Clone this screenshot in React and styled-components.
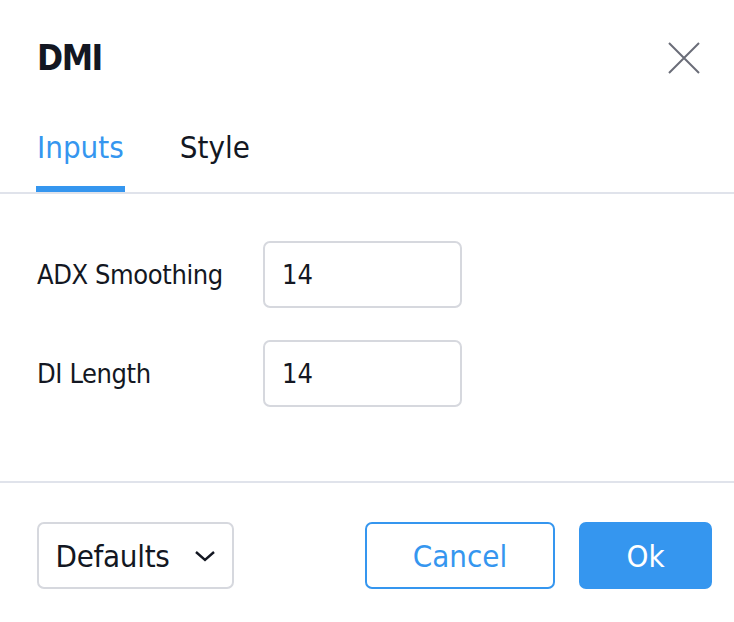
import { useState } from 'react'
import styled, { createGlobalStyle } from 'styled-components'

const GlobalStyle = createGlobalStyle`
  html, body {
    margin: 0;
    padding: 0;
    background: #ffffff;
  }
  body {
    font-family: "DejaVu Sans Condensed", "DejaVu Sans", sans-serif;
    font-stretch: condensed;
    color: #131722;
  }
`;

const Dialog = styled.div`
  width: 734px;
  height: 622px;
  display: flex;
  flex-direction: column;
  background: #ffffff;
`;

const Header = styled.div`
  display: flex;
  align-items: center;
  justify-content: space-between;
  height: 56px;
  padding: 30px 34px 0 37px;
`;

const Title = styled.h1`
  margin: 0;
  font-size: 35px;
  font-weight: 700;
  letter-spacing: -1.5px;
`;

const CloseButton = styled.button`
  display: flex;
  align-items: center;
  justify-content: center;
  width: 32px;
  height: 32px;
  padding: 0;
  border: none;
  background: transparent;
  color: #6a6d78;
  cursor: pointer;
`;

const Tabs = styled.div`
  display: flex;
  gap: 56px;
  padding: 0 37px;
  margin-top: 43px;
  border-bottom: 2px solid #e0e3eb;
`;

const Tab = styled.button`
  position: relative;
  padding: 0 0 27px;
  border: none;
  background: transparent;
  font-family: inherit;
  font-stretch: condensed;
  font-size: 31px;
  color: ${props => props.active ? '#3596ef' : '#131722'};
  cursor: pointer;

  &::after {
    content: '';
    position: absolute;
    left: -1px;
    right: -1px;
    bottom: 0;
    height: 6px;
    background: ${props => props.active ? '#3596ef' : 'transparent'};
  }
`;

const Body = styled.div`
  flex: 1;
  display: grid;
  grid-template-columns: 226px 199px;
  grid-auto-rows: 67px;
  row-gap: 32px;
  align-content: start;
  align-items: center;
  padding: 47px 37px 0;
  border-bottom: 2px solid #e0e3eb;
`;

const Label = styled.label`
  font-size: 27px;
  letter-spacing: -0.4px;
`;

const NumberInput = styled.input`
  box-sizing: border-box;
  width: 199px;
  height: 67px;
  padding: 0 17px;
  border: 2px solid #d6d8de;
  border-radius: 7px;
  font-family: inherit;
  font-stretch: condensed;
  font-size: 27px;
  color: #131722;
  outline: none;
`;

const Footer = styled.div`
  display: flex;
  align-items: center;
  gap: 24px;
  height: 67px;
  padding: 39px 22px 33px 37px;
`;

const Button = styled.button`
  box-sizing: border-box;
  display: flex;
  align-items: center;
  justify-content: center;
  gap: 24px;
  height: 67px;
  width: ${props => props.width}px;
  border-radius: 7px;
  border: 2px solid ${props =>
    props.variant === 'primary' ? '#3596ef' :
    props.variant === 'outline' ? '#3596ef' : '#d6d8de'};
  background: ${props => props.variant === 'primary' ? '#3596ef' : '#ffffff'};
  color: ${props =>
    props.variant === 'primary' ? '#ffffff' :
    props.variant === 'outline' ? '#3596ef' : '#131722'};
  font-family: inherit;
  font-stretch: condensed;
  font-size: 31px;
  letter-spacing: ${props => props.variant ? '0' : '-0.3px'};
  cursor: pointer;
`;

const Spacer = styled.div`
  flex: 1;
`;

function CloseIcon() {
  return (
    <svg width="32" height="32" viewBox="0 0 32 32" fill="none">
      <path d="M1 1 L31 31 M31 1 L1 31" stroke="currentColor" strokeWidth="2" />
    </svg>
  );
}

function ChevronIcon() {
  return (
    <svg width="22" height="14" viewBox="0 0 22 14" fill="none">
      <path d="M2 3 L11 11 L20 3" stroke="currentColor" strokeWidth="2.4" />
    </svg>
  );
}

export default function App() {
  const [tab, setTab] = useState('inputs');
  const [adx, setAdx] = useState('14');
  const [di, setDi] = useState('14');

  return (
    <Dialog>
      <GlobalStyle />
      <Header>
        <Title>DMI</Title>
        <CloseButton aria-label="Close">
          <CloseIcon />
        </CloseButton>
      </Header>
      <Tabs>
        <Tab active={tab === 'inputs'} onClick={() => setTab('inputs')}>Inputs</Tab>
        <Tab active={tab === 'style'} onClick={() => setTab('style')}>Style</Tab>
      </Tabs>
      <Body>
        <Label>ADX Smoothing</Label>
        <NumberInput value={adx} onChange={e => setAdx(e.target.value)} />
        <Label>DI Length</Label>
        <NumberInput value={di} onChange={e => setDi(e.target.value)} />
      </Body>
      <Footer>
        <Button width={197}>
          Defaults
          <ChevronIcon />
        </Button>
        <Spacer />
        <Button variant="outline" width={190}>Cancel</Button>
        <Button variant="primary" width={133}>Ok</Button>
      </Footer>
    </Dialog>
  );
}
